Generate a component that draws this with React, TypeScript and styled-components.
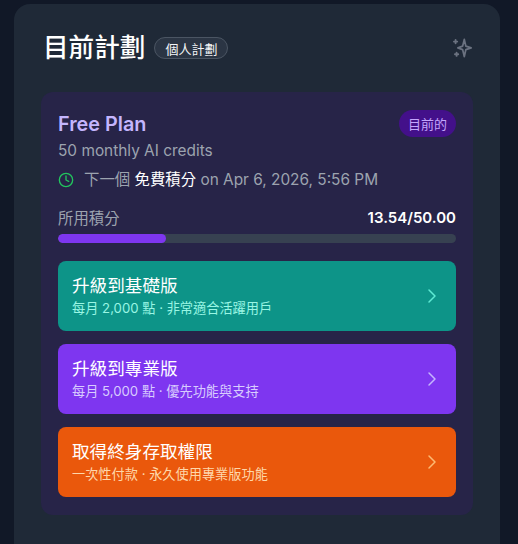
import { ChevronRight, Clock } from 'lucide-react';
import styled, { createGlobalStyle } from 'styled-components';

type UpgradeOption = {
  title: string;
  detail: string;
  background: string;
  detailColor: string;
  chevronColor: string;
};

const UPGRADE_OPTIONS: UpgradeOption[] = [
  {
    title: '升級到基礎版',
    detail: '每月 2,000 點 · 非常適合活躍用戶',
    background: '#0d9488',
    detailColor: '#99f6e4',
    chevronColor: '#5eead4'
  },
  {
    title: '升級到專業版',
    detail: '每月 5,000 點 · 優先功能與支持',
    background: '#7e36f0',
    detailColor: '#d8ccfe',
    chevronColor: '#c4b5fd'
  },
  {
    title: '取得終身存取權限',
    detail: '一次性付款 · 永久使用專業版功能',
    background: '#ea580c',
    detailColor: '#fed7aa',
    chevronColor: '#fdba74'
  }
];

const USED_PERCENT = (13.54 / 50) * 100;

function App() {
  return (
    <>
      <GlobalStyle />
      <Page>
        <Card>
          <CardHeader>
            <HeaderTitle>
              <Heading>目前計劃</Heading>
              <PlanTag>個人計劃</PlanTag>
            </HeaderTitle>
            <SparkleIcon viewBox="0 0 24 24" fill="none" stroke="currentColor" strokeWidth="1.9">
              <path d="M14.5 2.6 16.2 10l5.8 1.9-5.8 1.9-1.7 7.6-1.8-7.6-5.2-1.9 5.2-1.9z" strokeLinejoin="round" />
              <path d="M5 3.2v3.6M3.2 5h3.6M6.1 17v3.6M4.3 18.8h3.6" strokeLinecap="round" strokeWidth="2" />
            </SparkleIcon>
          </CardHeader>
          <PlanPanel>
            <PlanTop>
              <PlanName>Free Plan</PlanName>
              <CurrentBadge>目前的</CurrentBadge>
            </PlanTop>
            <PlanCredits>50 monthly AI credits</PlanCredits>
            <RefreshRow>
              <Clock size={16} color="#22c55e" strokeWidth={2} />
              <RefreshText>
                下一個 <strong>免費積分</strong> on Apr 6, 2026, 5:56 PM
              </RefreshText>
            </RefreshRow>
            <UsageRow>
              <UsageLabel>所用積分</UsageLabel>
              <UsageValue>13.54/50.00</UsageValue>
            </UsageRow>
            <UsageTrack>
              <UsageFill style={{ width: `${USED_PERCENT}%` }} />
            </UsageTrack>
            <OptionList>
              {UPGRADE_OPTIONS.map(({ title, detail, background, detailColor, chevronColor }) => (
                <OptionButton key={title} $background={background}>
                  <OptionText>
                    <OptionTitle>{title}</OptionTitle>
                    <OptionDetail $color={detailColor}>{detail}</OptionDetail>
                  </OptionText>
                  <ChevronRight size={24} color={chevronColor} strokeWidth={1.5} />
                </OptionButton>
              ))}
            </OptionList>
          </PlanPanel>
        </Card>
      </Page>
    </>
  );
}

const GlobalStyle = createGlobalStyle`
  html, body {
    margin: 0;
    height: 100%;
    background: #111827;
    overflow: hidden;
  }

  * {
    box-sizing: border-box;
  }

  body {
    font-family: Inter, "Noto Sans CJK TC", sans-serif;
  }
`;

const Page = styled.div`
  width: 518px;
  height: 544px;
  padding: 4px 18px 0 14px;
  overflow: hidden;
`;

const Card = styled.section`
  width: 486px;
  height: 560px;
  padding: 26px 27px;
  background: #1f2937;
  border-radius: 16px;
`;

const CardHeader = styled.header`
  display: flex;
  align-items: center;
  justify-content: space-between;
  height: 36px;
  margin-bottom: 26px;
  padding-left: 2px;
`;

const HeaderTitle = styled.div`
  display: flex;
  align-items: center;
  gap: 9px;
`;

const Heading = styled.h2`
  margin: 0;
  font-size: 25.6px;
  line-height: 32px;
  font-weight: 500;
  color: #ffffff;
`;

const PlanTag = styled.span`
  display: inline-flex;
  align-items: center;
  height: 22px;
  padding: 0 10px;
  border: 1px solid #4b5563;
  border-radius: 999px;
  background: #2b3544;
  font-size: 13px;
  font-weight: 400;
  color: #f3f4f6;
`;

const SparkleIcon = styled.svg`
  width: 22px;
  height: 22px;
  color: #6b7280;
`;

const PlanPanel = styled.div`
  padding: 18px 17px 18px;
  background: #272448;
  border-radius: 12px;
`;

const PlanTop = styled.div`
  display: flex;
  align-items: center;
  justify-content: space-between;
  height: 28px;
`;

const PlanName = styled.h3`
  margin: 0;
  font-size: 19.8px;
  line-height: 28px;
  font-weight: 600;
  color: #c4b5fd;
`;

const CurrentBadge = styled.span`
  display: inline-flex;
  align-items: center;
  height: 27px;
  padding: 0 9px;
  margin-top: -2px;
  border-radius: 999px;
  background: #43108a;
  font-size: 13px;
  color: #c4a5fd;
`;

const PlanCredits = styled.p`
  margin: 3px 0 0;
  font-size: 15.4px;
  line-height: 20px;
  color: #9ca3af;
`;

const RefreshRow = styled.div`
  display: flex;
  align-items: center;
  gap: 10px;
  margin-top: 9px;
  height: 20px;
`;

const RefreshText = styled.span`
  font-size: 15.4px;
  line-height: 20px;
  white-space: nowrap;
  color: #9ca3af;

  strong {
    font-weight: 400;
    color: #ffffff;
  }
`;

const UsageRow = styled.div`
  display: flex;
  align-items: center;
  justify-content: space-between;
  margin-top: 17px;
  height: 20px;
`;

const UsageLabel = styled.span`
  font-size: 15.4px;
  color: #9ca3af;
`;

const UsageValue = styled.span`
  font-size: 15px;
  font-weight: 600;
  color: #ffffff;
`;

const UsageTrack = styled.div`
  height: 9px;
  margin-top: 7px;
  background: #374151;
  border-radius: 999px;
  overflow: hidden;
`;

const UsageFill = styled.div`
  height: 100%;
  background: #7e36f0;
  border-radius: 999px;
`;

const OptionList = styled.div`
  display: flex;
  flex-direction: column;
  gap: 13px;
  margin-top: 18px;
`;

const OptionButton = styled.div<{ $background: string }>`
  display: flex;
  align-items: center;
  justify-content: space-between;
  height: 70px;
  padding: 0 12px 0 14px;
  background: ${({ $background }) => $background};
  border-radius: 8px;
`;

const OptionText = styled.div`
  display: flex;
  flex-direction: column;
  margin-bottom: 5px;
`;

const OptionTitle = styled.span`
  font-size: 17.6px;
  line-height: 28px;
  font-weight: 400;
  color: #ffffff;
`;

const OptionDetail = styled.span<{ $color: string }>`
  font-size: 13.2px;
  line-height: 16px;
  color: ${({ $color }) => $color};
`;

export default App;
